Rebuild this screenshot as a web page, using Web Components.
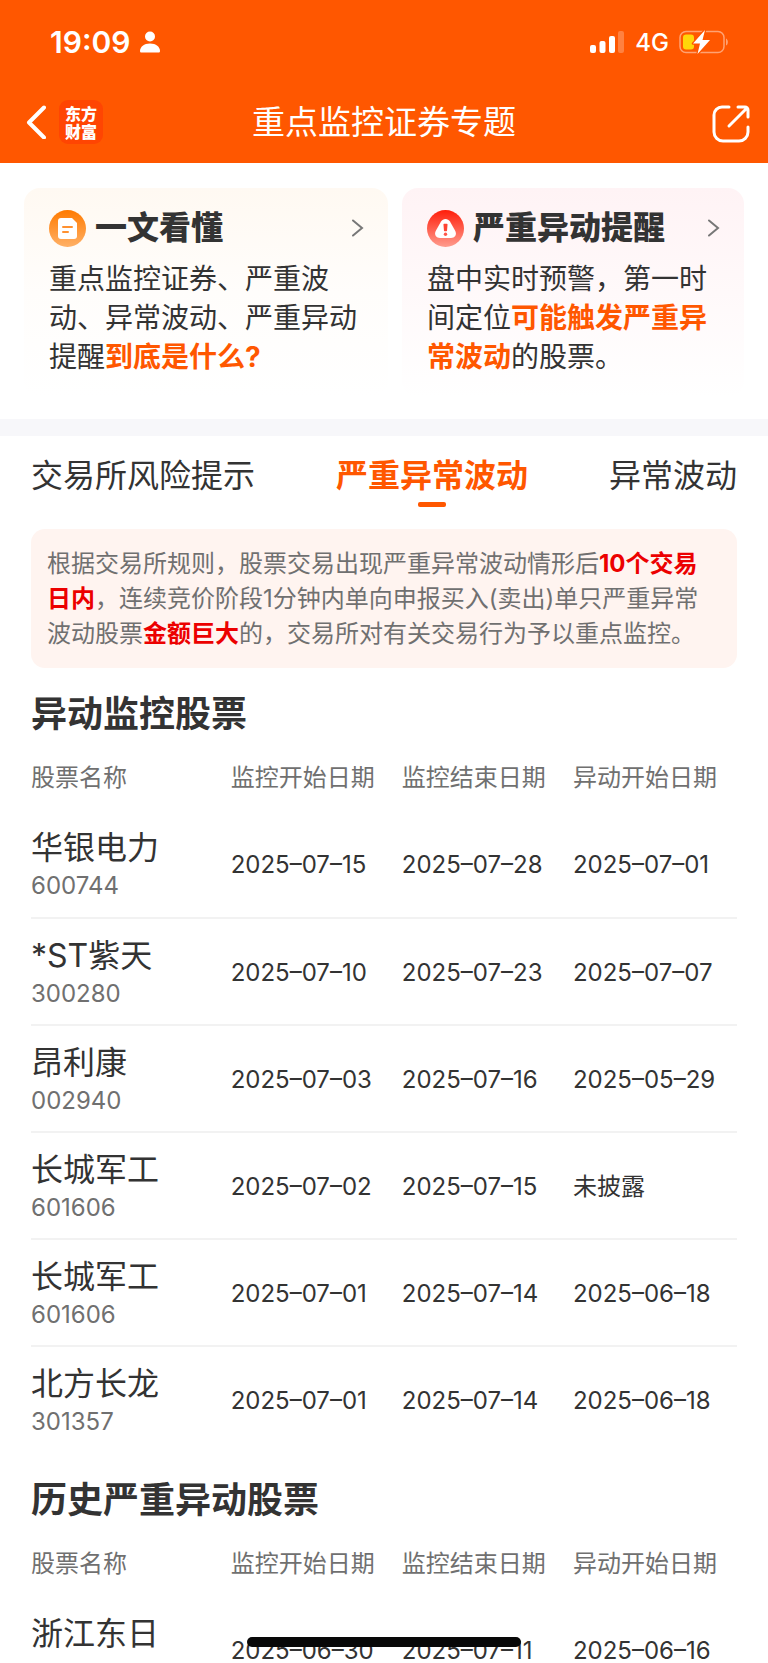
<!DOCTYPE html>
<html lang="zh-CN">
<head>
  <meta charset="utf-8">
  <meta name="viewport" content="width=device-width, initial-scale=1">
  <title>重点监控证券专题</title>
  <style>
    html, body {
      margin: 0;
      height: 100%;
    }

    body {
      font-family: Inter, "Noto Sans CJK SC", sans-serif;
      color: #333;
      background: #fff;
      --brand: #ff5700;
      --alert: #ec0000;
      --muted: #707070;
    }

    b {
      font-weight: 700;
      color: var(--brand);
    }

    notice-box b {
      color: var(--alert);
    }
  </style>
</head>
<body>
  <app-shell>
    <status-bar slot="header"></status-bar>
    <nav-bar slot="header">重点监控证券专题</nav-bar>

    <card-row>
      <info-card>
        <svg slot="icon" width="37" height="37" viewBox="0 0 37 37" aria-hidden="true">
          <defs>
            <linearGradient id="doc" x2="0" y2="1">
              <stop offset="0" stop-color="#ff7a00"/>
              <stop offset="1" stop-color="#ffb066"/>
            </linearGradient>
          </defs>
          <circle cx="18.500" cy="18.500" r="18.500" fill="url(#doc)"/>
          <path d="M12 8h11l5 5v13a3 3 0 0 1-3 3H12a3 3 0 0 1-3-3V11a3 3 0 0 1 3-3z" fill="#fff"/>
          <path d="M14 17h9M14 22h5" fill="none" stroke="#ff9130" stroke-width="2" stroke-linecap="round"/>
        </svg>
        <span slot="title">一文看懂</span>
        重点监控证券、严重波动、异常波动、严重异动提醒<b>到底是什么?</b>
      </info-card>
      <info-card class="alert">
        <svg slot="icon" width="37" height="37" viewBox="0 0 37 37" aria-hidden="true">
          <defs>
            <linearGradient id="warn" x2="0" y2="1">
              <stop offset="0" stop-color="#ff1e0a"/>
              <stop offset="1" stop-color="#ff9c8e"/>
            </linearGradient>
          </defs>
          <circle cx="18.500" cy="18.500" r="18.500" fill="url(#warn)"/>
          <path d="M14 11.500c2-3.500 7-3.500 9 0l5 9c2.500 4.500-.500 7.500-4 7.500H13c-3.500 0-6.500-3-4-7.500z" fill="#fff"/>
          <path d="M17.200 14.500h2.600l-.500 6h-1.600z" fill="#ff4433" stroke="#ff4433" stroke-width="1.500" stroke-linejoin="round"/>
          <circle cx="18.500" cy="24.300" r="1.700" fill="#ff5547"/>
        </svg>
        <span slot="title">严重异动提醒</span>
        盘中实时预警，第一时间定位<b>可能触发严重异常波动</b>的股票。
      </info-card>
    </card-row>

    <tab-list tabs="交易所风险提示,严重异常波动,异常波动" selected="1"></tab-list>

    <notice-box>根据交易所规则，股票交易出现严重异常波动情形后<b>10个交易日内</b>，连续竞价阶段1分钟内单向申报买入(卖出)单只严重异常波动股票<b>金额巨大</b>的，交易所对有关交易行为予以重点监控。</notice-box>

    <stock-table source="current">异动监控股票</stock-table>
    <stock-table source="history">历史严重异动股票</stock-table>
  </app-shell>

  <script>
    const stocks = {
      current: [
        ['华银电力', '600744', '2025–07–15', '2025–07–28', '2025–07–01'],
        ['*ST紫天', '300280', '2025–07–10', '2025–07–23', '2025–07–07'],
        ['昂利康', '002940', '2025–07–03', '2025–07–16', '2025–05–29'],
        ['长城军工', '601606', '2025–07–02', '2025–07–15', '未披露'],
        ['长城军工', '601606', '2025–07–01', '2025–07–14', '2025–06–18'],
        ['北方长龙', '301357', '2025–07–01', '2025–07–14', '2025–06–18']
      ],
      history: [
        ['浙江东日', '', '2025–06–30', '2025–07–11', '2025–06–16']
      ]
    }

    class BaseElement extends HTMLElement {
      constructor() {
        super()
        this.attachShadow({mode: 'open'})
      }

      connectedCallback() {
        this.shadowRoot.innerHTML = this.template
      }
    }

    customElements.define('app-shell', class AppShell extends BaseElement {
      get template() {
        return `
        <style>
          :host {
            display: flex;
            flex-direction: column;
            height: 100vh;
            overflow: hidden;
          }

          header {
            flex: none;
            color: #fff;
            background: var(--brand);
          }

          main {
            flex: 1;
            min-height: 0;
            overflow-y: auto;
            scrollbar-width: none;
          }

          /* home indicator, floats over the list */
          .home {
            position: fixed;
            left: 50%;
            bottom: 16px;
            width: 274px;
            height: 10px;
            margin-left: -137px;
            border-radius: 5px;
            background: #080808;
          }
        </style>
        <header><slot name="header"></slot></header>
        <main><slot></slot></main>
        <div class="home"></div>
        `
      }
    })

    customElements.define('status-bar', class StatusBar extends BaseElement {
      get template() {
        return `
        <style>
          :host {
            display: flex;
            align-items: center;
            justify-content: space-between;
            height: 84px;
            box-sizing: border-box;
            padding: 0 39px 0 50px;
          }

          div {
            display: flex;
            align-items: center;
            gap: 10px;
          }

          time {
            font-size: 30px;
            font-weight: 600;
          }

          span {
            font-size: 24px;
            font-weight: 500;
          }
        </style>
        <div>
          <time>19:09</time>
          <svg width="20" height="22" viewBox="0 0 20 22" fill="#fff">
            <circle cx="10" cy="5.500" r="5"/>
            <path d="M0 20c0-4 4-7.500 10-7.500S20 16 20 20c0 1-.600 1.500-1.500 1.500h-17C.600 21.500 0 21 0 20z"/>
          </svg>
        </div>
        <div>
          <svg width="35" height="22" viewBox="0 0 35 22" fill="#fff">
            <rect y="14" width="6" height="8" rx="2"/>
            <rect x="9.500" y="10" width="6" height="12" rx="2"/>
            <rect x="19" y="5" width="6" height="17" rx="2"/>
            <rect x="28" width="6" height="22" rx="2" opacity=".25"/>
          </svg>
          <span>4G</span>
          <svg width="50" height="24" viewBox="0 0 50 24">
            <rect x="1" y="1.500" width="44" height="21" rx="6" fill="none" stroke="#fff" stroke-opacity=".45" stroke-width="1.500"/>
            <path d="M47 8.500c2.500 1 2.500 6 0 7z" fill="#fff" fill-opacity=".45"/>
            <rect x="4" y="4.500" width="11" height="15" rx="3" fill="#ffd60a"/>
            <path d="M26 0 14 13.500h7L18.500 24 31 10h-7.500z" fill="#fff" stroke="#ff5700" stroke-width="2.500" paint-order="stroke" stroke-linejoin="round"/>
          </svg>
        </div>
        `
      }
    })

    customElements.define('nav-bar', class NavBar extends BaseElement {
      get template() {
        return `
        <style>
          :host {
            display: grid;
            grid-template-columns: 1fr auto 1fr;
            align-items: center;
            height: 79px;
            box-sizing: border-box;
            padding: 0 18px 4px;
          }

          div {
            display: flex;
            align-items: center;
            gap: 13px;
            padding-left: 8px;
          }

          button {
            display: flex;
            padding: 0;
            border: 0;
            color: inherit;
            background: none;
            cursor: pointer;
          }

          .share {
            justify-self: end;
            padding-top: 4px;
          }

          .logo {
            width: 44px;
            height: 44px;
            box-sizing: border-box;
            padding-top: 4px;
            border-radius: 9px;
            font: 900 16px/18px "Noto Sans CJK SC", sans-serif;
            text-align: center;
            background: #ff4502;
          }

          h1 {
            margin: 0;
            font-size: 33px;
            font-weight: 400;
            line-height: 40px;
          }
        </style>
        <div>
          <button aria-label="返回">
            <svg width="20" height="34" viewBox="0 0 20 34" fill="none" stroke="#fff" stroke-width="4" stroke-linecap="round" stroke-linejoin="round">
              <path d="M18 2.500 3 17.500l15 15"/>
            </svg>
          </button>
          <span class="logo">东方<br>财富</span>
        </div>
        <h1><slot></slot></h1>
        <button class="share" aria-label="分享">
          <svg width="38" height="38" viewBox="0 0 38 38" fill="none" stroke="#fff" stroke-width="3" stroke-linecap="round" stroke-linejoin="round">
            <path d="M17 2h-7A8 8 0 0 0 2 10v17a9 9 0 0 0 9 9h16a9 9 0 0 0 9-9v-5"/>
            <path d="M17 21 35 3M26 2h7a3 3 0 0 1 3 3v7"/>
          </svg>
        </button>
        `
      }
    })

    customElements.define('card-row', class CardRow extends BaseElement {
      get template() {
        return `
        <style>
          :host {
            display: grid;
            grid-template-columns: 364fr 342fr;
            gap: 14px;
            padding: 25px 24px 22px;
            border-bottom: 17px solid #f7f7fa;
          }
        </style>
        <slot></slot>
        `
      }
    })

    customElements.define('info-card', class InfoCard extends BaseElement {
      get template() {
        return `
        <style>
          :host {
            display: block;
            border-radius: 16px;
            background: linear-gradient(#fff9f2, #fffdfb 50%, #fff);
          }

          :host(.alert) {
            background: linear-gradient(#fff3f5, #fff9fa 50%, #fff);
          }

          a {
            display: block;
            padding: 20px 24px 20px 25px;
            color: inherit;
            text-decoration: none;
          }

          .head {
            display: flex;
            align-items: center;
            gap: 9px;
            height: 40px;
          }

          h2 {
            flex: 1;
            margin: 0;
            font-size: 32px;
            font-weight: 900;
            line-height: 40px;
            white-space: nowrap;
          }

          p {
            margin: 12px 0 0;
            font-size: 28px;
            line-height: 39px;
          }
        </style>
        <a href="#">
          <div class="head">
            <slot name="icon"></slot>
            <h2><slot name="title"></slot></h2>
            <svg width="13" height="18" viewBox="0 0 13 18" fill="none" stroke="#777" stroke-width="2" stroke-linecap="round">
              <path d="M2 1.500 11 9l-9 7.500"/>
            </svg>
          </div>
          <p><slot></slot></p>
        </a>
        `
      }
    })

    customElements.define('tab-list', class TabList extends BaseElement {
      get template() {
        const selected = Number(this.getAttribute('selected'))
        const tabs = this.getAttribute('tabs').split(',').map((tab, i) =>
          `<button role="tab" aria-selected="${i === selected}">${tab}</button>`
        ).join('')

        return `
        <style>
          :host {
            display: flex;
            justify-content: space-between;
            padding: 20px 31px 22px;
          }

          button {
            display: flex;
            flex-direction: column;
            align-items: center;
            gap: 6px;
            padding: 0;
            border: 0;
            font: inherit;
            font-size: 32px;
            line-height: 40px;
            color: inherit;
            background: none;
            cursor: pointer;
          }

          button::after {
            content: "";
            width: 28px;
            height: 5px;
            border-radius: 2px;
          }

          [aria-selected="true"] {
            font-weight: 700;
            color: var(--brand);
          }

          [aria-selected="true"]::after {
            background: var(--brand);
          }
        </style>
        ${tabs}
        `
      }
    })

    customElements.define('notice-box', class NoticeBox extends BaseElement {
      get template() {
        return `
        <style>
          :host {
            display: block;
            margin: 0 31px;
            padding: 17px 16px;
            border-radius: 14px;
            font-size: 24px;
            line-height: 35px;
            color: var(--muted);
            background: #fff4f0;
          }
        </style>
        <slot></slot>
        `
      }
    })

    customElements.define('stock-table', class StockTable extends BaseElement {
      get template() {
        const rows = stocks[this.getAttribute('source')].map(([name, code, ...dates]) => `
          <tr>
            <td><strong>${name}</strong><small>${code}</small></td>
            ${dates.map(date => `<td>${date}</td>`).join('')}
          </tr>`).join('')

        return `
        <style>
          :host {
            display: block;
            padding: 22px 31px 0;
          }

          h2 {
            margin: 0;
            font-size: 36px;
            font-weight: 700;
            line-height: 48px;
          }

          table {
            width: 100%;
            border-collapse: collapse;
            table-layout: fixed;
          }

          col {
            width: 24%;
          }

          col:first-child {
            width: 28%;
          }

          col:last-child {
            width: 23%;
          }

          th, td {
            padding: 0;
            font-size: 24px;
            font-weight: 400;
            line-height: 36px;
            text-align: left;
            white-space: nowrap;
          }

          th {
            height: 73px;
            box-sizing: border-box;
            padding-top: 6px;
            color: var(--muted);
          }

          td {
            height: 107px;
            box-sizing: border-box;
            padding-top: 2px;
            border-bottom: 2px solid #f2f2f2;
          }

          td:first-child {
            padding-top: 4px;
          }

          tr:last-child td {
            border-color: transparent;
          }

          strong {
            display: block;
            font-size: 32px;
            font-weight: 400;
            line-height: 40px;
          }

          small {
            display: block;
            height: 36px;
            font-size: 24px;
            color: var(--muted);
          }
        </style>
        <h2><slot></slot></h2>
        <table>
          <colgroup><col><col><col><col></colgroup>
          <thead>
            <tr><th>股票名称</th><th>监控开始日期</th><th>监控结束日期</th><th>异动开始日期</th></tr>
          </thead>
          <tbody>${rows}</tbody>
        </table>
        `
      }
    })
  </script>
</body>
</html>
